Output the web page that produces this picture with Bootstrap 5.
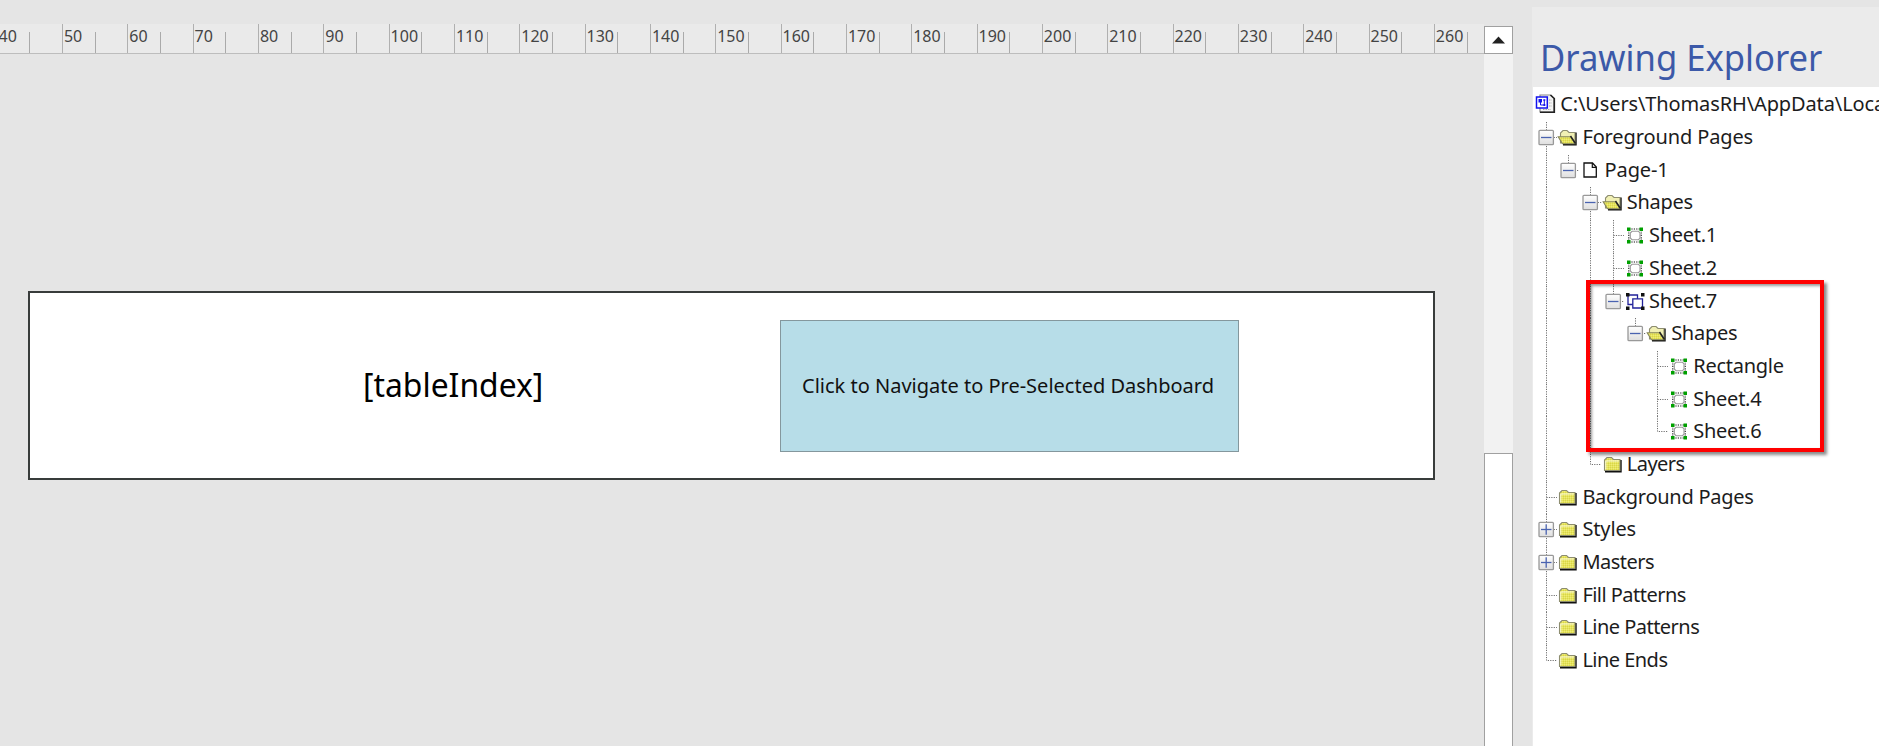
<!DOCTYPE html>
<html lang="en">
<head>
<meta charset="utf-8">
<title>Drawing Explorer</title>
<link href="https://cdn.jsdelivr.net/npm/bootstrap@5.3.0/dist/css/bootstrap.min.css" rel="stylesheet">
<style>
body{background:#e5e5e5;font-family:"Noto Sans","Open Sans",sans-serif;color:#222;height:746px}
.canvas-pane{width:1484px}
.ruler{margin-top:24px;height:30px;background:#eaeaea;border-bottom:1px solid #bdbdbd}
.tick{flex:0 0 65.34px;height:29px;border-left:1.5px solid #b0b0b0;font-size:16px;line-height:24px;padding-left:1px;color:#444;position:relative}
.tick:first-child{margin-left:-3.4px}
.tick::after{content:"";position:absolute;left:31.7px;top:8px;bottom:0;width:1px;background:#aaa}
.page-shape{margin:237px 0 0 28px;width:1407px;height:188.5px;background:#fff;border:2px solid #383c3b}
.index-text{width:176px;margin-left:333px;font-size:32.5px;line-height:40px;color:#000}
.index-text span{transform:scaleX(.98)}
.nav-shape{width:459px;height:132px;margin:1px 0 0 241px;padding-left:21px;background:#b7dde8;border:1px solid #84979d;font-size:20px;color:#111}
.nav-shape span,.index-text span,.title-text,.tree-text{display:inline-block;transform-origin:0 50%}
.scroll-pane{width:29px;margin-top:26px;background:#f2f2f2}
.scroll-up{height:28px;background:#fff;border:1px solid #a0a0a0}
.scroll-thumb{margin-top:399px;background:#fff;border:1px solid #a0a0a0;border-bottom:0}
.explorer{margin:7px 0 0 19px;background:#ebebeb}
.title-text{height:80px;margin-left:8px;padding-top:26px;font-size:37px;line-height:48px;color:#3c59a8;transform:scaleX(.936)}
.tree{margin-left:1px;padding:2.4px 0 0 2px;background:#fff;font-size:20px;color:#1c1c1c}
.node{height:32.7px}
.cell{flex:0 0 22.2px;height:32.7px}
.tree-text{margin-left:3px;line-height:30px;letter-spacing:-.27px}
.tree-text.ls-wide{letter-spacing:-.12px}
.tree-text.ls-tight{letter-spacing:-.53px}
.callout{left:53px;top:193px;width:238px;height:172px;border:4px solid #f00;box-shadow:3px 3px 3px rgba(0,0,0,.45),inset 2px 2px 3px rgba(0,0,0,.4)}
</style>
</head>
<body class="d-flex overflow-hidden">
<svg width="0" height="0" class="position-absolute">
<defs>
<pattern id="dither" width="2" height="2" patternUnits="userSpaceOnUse"><rect width="2" height="2" fill="#e6e35c"/><rect width="1" height="1" fill="#d8d648"/><rect x="1" y="1" width="1" height="1" fill="#eeec78"/></pattern>
<linearGradient id="boxfill" x2="0" y2="1"><stop offset="0" stop-color="#fff"/><stop offset="1" stop-color="#dedede"/></linearGradient>
<g id="v" fill="none" stroke="#707070" stroke-dasharray="1.2 1.2"><path d="M11.500 0V32.700"/></g>
<g id="t" fill="none" stroke="#707070" stroke-dasharray="1.2 1.2"><path d="M11.500 0V32.700M11.500 15.500H22.200"/></g>
<g id="l" fill="none" stroke="#707070" stroke-dasharray="1.2 1.2"><path d="M11.500 0V15.500H22.200"/></g>
<g id="box"><rect x="4" y="8.300" width="14.400" height="14.400" rx="1" fill="url(#boxfill)" stroke="#999" stroke-width="1.300"/><path d="M6 15.500H16.500" stroke="#4a63b0" stroke-width="1.300"/></g>
<g id="mt"><use href="#t"/><use href="#box"/></g>
<g id="ml"><use href="#l"/><use href="#box"/></g>
<g id="pt"><use href="#t"/><use href="#box"/><path d="M11.200 10.300V20.700" stroke="#4a63b0" stroke-width="1.300"/></g>
<g id="closed"><path d="M3 22.500H18.800V11" fill="none" stroke="#111" stroke-width="1.800"/><path d="M2.500 21.500V11L5 8.500H9.500L11.500 10.500H18V21.500Z" fill="url(#dither)" stroke="#8d8d70" stroke-width="1.100"/><path d="M3.800 20.500V12H17" fill="none" stroke="#fff" stroke-width=".8"/></g>
<g id="open"><path d="M6 22.500H18.800V10.500" fill="none" stroke="#111" stroke-width="1.800"/><path d="M3.500 21V11L6 8.500H10L12 10.500H18V21Z" fill="#f1f0b4" stroke="#8d8d70" stroke-width="1.100"/><path d="M1.200 14.800H13.500L18 21.700H5.500Z" fill="url(#dither)" stroke="#85855f" stroke-width="1.100"/><path d="M13.500 14L18.500 21.500" stroke="#222" stroke-width="1.400"/></g>
<g id="sheet"><path d="M5 8H13.500L17.300 12V22H5Z" fill="#fff" stroke="#111" stroke-width="1.300"/><path d="M13.300 8V12.300H17.300" fill="none" stroke="#111" stroke-width="1.200"/></g>
<g id="shape"><path d="M5 9H17M5 22H17M4.800 10V22M17.200 10V22" stroke="#111" stroke-width="1.100" stroke-dasharray="1.200 1.200"/><path d="M8 11.300H14.500L16 13V18L14.500 19.700H8L6.300 18V13Z" fill="#fff" stroke="#999" stroke-width="1.100"/><path d="M3 7.500h3.500V11H3zM15.500 7.500H19V11h-3.500zM3 20h3.500v3.500H3zM15.500 20H19v3.500h-3.500z" fill="#00a000"/></g>
<g id="group"><path d="M4 9H13.500V18.500H4Z" fill="#fff" stroke="#22229a" stroke-width="1.300"/><path d="M8.800 12.800H18.500V22H8.800Z" fill="#fff" stroke="#22229a" stroke-width="1.300"/><path d="M2 7h3.500v3.500H2zM17 7h3.500v3.500H17zM2 20.500h3.500V24H2zM17 20.500h3.500V24H17z" fill="#111"/></g>
<g id="doc"><path d="M5 6H15.500L19 9.500V23H5Z" fill="#f4f4f4" stroke="#8a8a8a" stroke-width="1.200"/><path d="M5 23.300H19.300V9.500L15.500 6" fill="none" stroke="#222" stroke-width="1.600"/><path d="M14 11H17M14 14H17M14 17H17M8 20.500H16" stroke="#aaa" stroke-dasharray="1.500 1"/><path d="M1.500 8H12.300V19H1.500Z" fill="#fff" stroke="#11e" stroke-width="1.500"/><path d="M3.500 10h3.500v3.500H3.500zM8.300 10.200h2v1.500h-2zM8.300 15h2v2h-2z" fill="#11e"/><path d="M5.500 13V16H8.500M9.300 11V15" fill="none" stroke="#11e"/></g>
</defs>
</svg>
<main class="canvas-pane flex-shrink-0">
<div class="ruler d-flex overflow-hidden">
<div class="tick">40</div><div class="tick">50</div><div class="tick">60</div><div class="tick">70</div><div class="tick">80</div><div class="tick">90</div><div class="tick">100</div><div class="tick">110</div><div class="tick">120</div><div class="tick">130</div><div class="tick">140</div><div class="tick">150</div><div class="tick">160</div><div class="tick">170</div><div class="tick">180</div><div class="tick">190</div><div class="tick">200</div><div class="tick">210</div><div class="tick">220</div><div class="tick">230</div><div class="tick">240</div><div class="tick">250</div><div class="tick">260</div>
</div>
<section class="page-shape d-flex align-items-center">
<div class="index-text text-nowrap"><span>[tableIndex]</span></div>
<div class="nav-shape d-flex align-items-center text-nowrap"><span>Click to Navigate to Pre-Selected Dashboard</span></div>
</section>
</main>
<div class="scroll-pane d-flex flex-column flex-shrink-0">
<div class="scroll-up d-flex align-items-center justify-content-center"><svg width="13" height="8"><path d="M0 7.500L6.500 .5L13 7.500Z" fill="#222"/></svg></div>
<div class="scroll-thumb flex-grow-1"></div>
</div>
<aside class="explorer flex-grow-1 d-flex flex-column overflow-hidden text-nowrap">
<div><div class="title-text">Drawing Explorer</div></div>
<div class="tree flex-grow-1 position-relative">
<div class="node d-flex"><svg class="cell"><use href="#doc"/></svg><span class="tree-text ls-wide">C:\Users\ThomasRH\AppData\Loca</span></div>
<div class="node d-flex"><svg class="cell"><use href="#mt"/></svg><svg class="cell"><use href="#open"/></svg><span class="tree-text ls-wide">Foreground Pages</span></div>
<div class="node d-flex"><svg class="cell"><use href="#v"/></svg><svg class="cell"><use href="#ml"/></svg><svg class="cell"><use href="#sheet"/></svg><span class="tree-text ls-wide">Page-1</span></div>
<div class="node d-flex"><svg class="cell"><use href="#v"/></svg><svg class="cell"></svg><svg class="cell"><use href="#mt"/></svg><svg class="cell"><use href="#open"/></svg><span class="tree-text">Shapes</span></div>
<div class="node d-flex"><svg class="cell"><use href="#v"/></svg><svg class="cell"></svg><svg class="cell"><use href="#v"/></svg><svg class="cell"><use href="#t"/></svg><svg class="cell"><use href="#shape"/></svg><span class="tree-text">Sheet.1</span></div>
<div class="node d-flex"><svg class="cell"><use href="#v"/></svg><svg class="cell"></svg><svg class="cell"><use href="#v"/></svg><svg class="cell"><use href="#t"/></svg><svg class="cell"><use href="#shape"/></svg><span class="tree-text">Sheet.2</span></div>
<div class="node d-flex"><svg class="cell"><use href="#v"/></svg><svg class="cell"></svg><svg class="cell"><use href="#v"/></svg><svg class="cell"><use href="#ml"/></svg><svg class="cell"><use href="#group"/></svg><span class="tree-text">Sheet.7</span></div>
<div class="node d-flex"><svg class="cell"><use href="#v"/></svg><svg class="cell"></svg><svg class="cell"><use href="#v"/></svg><svg class="cell"></svg><svg class="cell"><use href="#ml"/></svg><svg class="cell"><use href="#open"/></svg><span class="tree-text">Shapes</span></div>
<div class="node d-flex"><svg class="cell"><use href="#v"/></svg><svg class="cell"></svg><svg class="cell"><use href="#v"/></svg><svg class="cell"></svg><svg class="cell"></svg><svg class="cell"><use href="#t"/></svg><svg class="cell"><use href="#shape"/></svg><span class="tree-text">Rectangle</span></div>
<div class="node d-flex"><svg class="cell"><use href="#v"/></svg><svg class="cell"></svg><svg class="cell"><use href="#v"/></svg><svg class="cell"></svg><svg class="cell"></svg><svg class="cell"><use href="#t"/></svg><svg class="cell"><use href="#shape"/></svg><span class="tree-text">Sheet.4</span></div>
<div class="node d-flex"><svg class="cell"><use href="#v"/></svg><svg class="cell"></svg><svg class="cell"><use href="#v"/></svg><svg class="cell"></svg><svg class="cell"></svg><svg class="cell"><use href="#l"/></svg><svg class="cell"><use href="#shape"/></svg><span class="tree-text">Sheet.6</span></div>
<div class="node d-flex"><svg class="cell"><use href="#v"/></svg><svg class="cell"></svg><svg class="cell"><use href="#l"/></svg><svg class="cell"><use href="#closed"/></svg><span class="tree-text ls-tight">Layers</span></div>
<div class="node d-flex"><svg class="cell"><use href="#t"/></svg><svg class="cell"><use href="#closed"/></svg><span class="tree-text">Background Pages</span></div>
<div class="node d-flex"><svg class="cell"><use href="#pt"/></svg><svg class="cell"><use href="#closed"/></svg><span class="tree-text ls-wide">Styles</span></div>
<div class="node d-flex"><svg class="cell"><use href="#pt"/></svg><svg class="cell"><use href="#closed"/></svg><span class="tree-text ls-tight">Masters</span></div>
<div class="node d-flex"><svg class="cell"><use href="#t"/></svg><svg class="cell"><use href="#closed"/></svg><span class="tree-text ls-tight">Fill Patterns</span></div>
<div class="node d-flex"><svg class="cell"><use href="#t"/></svg><svg class="cell"><use href="#closed"/></svg><span class="tree-text ls-tight">Line Patterns</span></div>
<div class="node d-flex"><svg class="cell"><use href="#l"/></svg><svg class="cell"><use href="#closed"/></svg><span class="tree-text ls-tight">Line Ends</span></div>
<div class="callout position-absolute"></div>
</div>
</aside>
<script src="https://cdn.jsdelivr.net/npm/bootstrap@5.3.0/dist/js/bootstrap.bundle.min.js"></script>
</body>
</html>
